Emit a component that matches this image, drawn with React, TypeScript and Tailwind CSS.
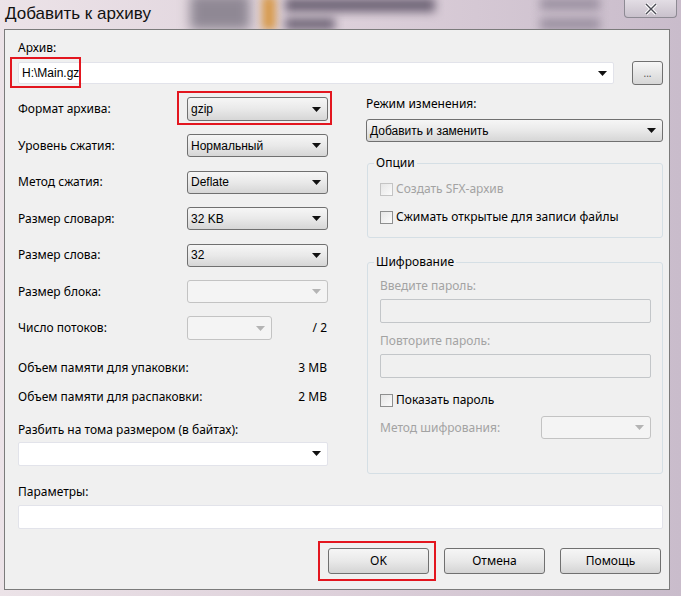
import React from 'react'

const font = { fontFamily: '"Noto Sans", "Open Sans", sans-serif' }
const valueFont = { fontFamily: '"Liberation Sans", Arial, sans-serif' }

const Arrow = ({ disabled }: { disabled?: boolean }) => (
  <svg width="9" height="5" viewBox="0 0 9 5" className="shrink-0">
    <path d="M0 0 H9 L4.5 5 Z" fill={disabled ? '#b4b4b4' : '#111'} />
  </svg>
)

// Windows 7 style dropdown
const Combo = ({
  value,
  className,
  disabled,
  editable,
}: {
  value?: string
  className: string
  disabled?: boolean
  editable?: boolean
}) => {
  let look = 'border-[#707070] bg-gradient-to-b from-[#f6f6f6] via-[#e9e9e9] to-[#d6d6d6] rounded-[3px]'
  if (disabled) look = 'border-[#c3c3c3] bg-[#f4f4f4] rounded-[3px]'
  if (editable) look = 'border-[#e2e3ea] bg-white rounded-[2px]'
  return (
    <div className={`flex items-center justify-between border pl-[3px] pr-[6px] ${look} ${className}`}>
      <span style={valueFont} className="text-[12px] leading-none text-black">
        {value}
      </span>
      <Arrow disabled={disabled} />
    </div>
  )
}

const Row = ({ label, children }: { label: string; children: React.ReactNode }) => (
  <div className="flex h-[36.5px] items-center">
    <span className="w-[169px] text-[12px]">{label}</span>
    {children}
  </div>
)

const Check = ({ label, disabled }: { label: string; disabled?: boolean }) => (
  <div className="flex items-center gap-[3px]">
    <div
      className={`h-[13px] w-[13px] border bg-gradient-to-br from-[#e6e6e6] to-[#fbfbfb] ${
        disabled ? 'border-[#c4c4c4]' : 'border-[#8e8f8f]'
      }`}
    />
    <span className={`text-[12px] ${disabled ? 'text-[#a3a3a3]' : 'text-black'}`}>{label}</span>
  </div>
)

const Button = ({ label }: { label: string }) => (
  <div className="flex h-[26px] w-[101px] items-center justify-center rounded-[3px] border border-[#707070] bg-gradient-to-b from-[#f6f6f6] via-[#e9e9e9] to-[#d4d4d4] text-[12px]">
    {label}
  </div>
)

const Group = ({ title, className, children }: { title: string; className: string; children: React.ReactNode }) => (
  <div className={`relative rounded-[3px] border border-[#d5dfe5] ${className}`}>
    <span className="absolute -top-[9px] left-[6px] bg-[#f0f0f0] px-[2px] text-[12px] leading-[16px]">{title}</span>
    {children}
  </div>
)

export default function App() {
  return (
    <div
      style={font}
      className="relative flex h-[596px] w-[681px] flex-col overflow-hidden bg-gradient-to-r from-[#ece3e8] via-[#ddd0da] to-[#c9bccb] text-black"
    >
      {/* blurred desktop behind the glass frame */}
      <div className="pointer-events-none absolute left-0 top-0 h-[29px] w-[681px] overflow-hidden">
        <div className="absolute left-[190px] top-[-6px] h-[36px] w-[60px] bg-[#8f8894] blur-[6px]" />
        <div className="absolute left-[262px] top-[-4px] h-[34px] w-[14px] bg-[#d79a4c] blur-[4px]" />
        <div className="absolute left-[285px] top-[-2px] h-[14px] w-[150px] bg-[#6e6476] blur-[5px]" />
        <div className="absolute left-[285px] top-[18px] h-[12px] w-[50px] bg-[#6e6476] blur-[5px]" />
        <div className="absolute left-[540px] top-[-2px] h-[12px] w-[60px] bg-[#9a90a0] blur-[5px]" />
        <div className="absolute left-[540px] top-[18px] h-[12px] w-[60px] bg-[#9a90a0] blur-[5px]" />
      </div>

      {/* Title bar */}
      <div className="relative flex h-[29px] shrink-0 items-start justify-between">
        <span
          style={{ fontFamily: '"Liberation Sans", Arial, sans-serif' }}
          className="pl-[5px] pt-[4px] text-[17px] leading-[20px] text-[#111]"
        >
          Добавить к архиву
        </span>
        <div className="mr-[4px] flex h-[18px] w-[53px] items-center justify-center rounded-b-[4px] border border-t-0 border-[#8d8a93] bg-gradient-to-b from-[#e2dde4] to-[#c9c1cc]">
          <svg width="14" height="12" viewBox="0 0 14 12">
            <path d="M2 1 L12 11 M12 1 L2 11" stroke="#fff" strokeWidth="3.4" />
            <path d="M2 1 L12 11 M12 1 L2 11" stroke="#4b4b55" strokeWidth="1.4" />
          </svg>
        </div>
      </div>

      {/* Client area */}
      <div className="relative ml-[4px] mr-[11px] flex h-[561px] shrink-0">
        <div className="relative w-full border border-[#7b7b7b] bg-[#f0f0f0] pl-[13px] pr-[6px] pt-[10px]">
          {/* Archive path */}
          <div className="text-[12px] leading-[16px]">Архив:</div>
          <div className="mt-[5px] flex items-center">
            <Combo editable value="H:\Main.gz" className="h-[22px] w-[596px]" />
            <div className="ml-[18px] flex h-[24px] w-[31px] items-center justify-center rounded-[3px] border border-[#707070] bg-gradient-to-b from-[#f6f6f6] to-[#d6d6d6] text-[10px] leading-none text-[#555]">
              ...
            </div>
          </div>

          {/* Two columns */}
          <div className="mt-[6px] flex">
            <div className="w-[310px]">
              <Row label="Формат архива:">
                <Combo value="gzip" className="h-[24px] w-[141px]" />
              </Row>
              <Row label="Уровень сжатия:">
                <Combo value="Нормальный" className="h-[23px] w-[141px]" />
              </Row>
              <Row label="Метод сжатия:">
                <Combo value="Deflate" className="h-[23px] w-[141px]" />
              </Row>
              <Row label="Размер словаря:">
                <Combo value="32 KB" className="h-[23px] w-[141px]" />
              </Row>
              <Row label="Размер слова:">
                <Combo value="32" className="h-[23px] w-[141px]" />
              </Row>
              <Row label="Размер блока:">
                <Combo disabled className="h-[23px] w-[141px]" />
              </Row>
              <Row label="Число потоков:">
                <Combo disabled className="h-[24px] w-[85px]" />
                <span className="ml-auto pr-[1px] text-[12px]">/ 2</span>
              </Row>
              <div className="mt-[13px] flex justify-between text-[12px] leading-[16px]">
                <span>Объем памяти для упаковки:</span>
                <span className="pr-[1px]">3 MB</span>
              </div>
              <div className="mt-[13px] flex justify-between text-[12px] leading-[16px]">
                <span>Объем памяти для распаковки:</span>
                <span className="pr-[1px]">2 MB</span>
              </div>
              <div className="mt-[17px] text-[12px] leading-[16px]">Разбить на тома размером (в байтах):</div>
              <Combo editable className="mt-[4px] h-[24px] w-[310px]" />
            </div>

            <div className="ml-[38px] w-[297px]">
              <div className="mt-[5px] text-[12px] leading-[16px]">Режим изменения:</div>
              <Combo value="Добавить и заменить" className="mt-[7px] h-[23px] w-[297px]" />
              <Group title="Опции" className="ml-[1px] mt-[21px] h-[75px] w-[296px]">
                <div className="flex flex-col gap-[10px] pl-[12px] pt-[16px]">
                  <Check disabled label="Создать SFX-архив" />
                  <Check label="Сжимать открытые для записи файлы" />
                </div>
              </Group>
              <Group title="Шифрование" className="ml-[1px] mt-[24px] h-[212px] w-[296px]">
                <div className="flex flex-col pl-[12px] pr-[11px] pt-[15px]">
                  <span className="text-[12px] leading-[16px] text-[#a3a3a3]">Введите пароль:</span>
                  <div className="mt-[5px] h-[24px] rounded-[2px] border border-[#c3c6c9] bg-[#f0f0f0]" />
                  <span className="mt-[10px] text-[12px] leading-[16px] text-[#a3a3a3]">Повторите пароль:</span>
                  <div className="mt-[5px] h-[24px] rounded-[2px] border border-[#c3c6c9] bg-[#f0f0f0]" />
                  <div className="mt-[13px]">
                    <Check label="Показать пароль" />
                  </div>
                  <div className="mt-[7px] flex items-center justify-between">
                    <span className="text-[12px] text-[#a3a3a3]">Метод шифрования:</span>
                    <Combo disabled className="h-[23px] w-[110px]" />
                  </div>
                </div>
              </Group>
            </div>
          </div>

          {/* Parameters */}
          <div className="mt-[10px] text-[12px] leading-[16px]">Параметры:</div>
          <div className="mt-[5px] h-[24px] w-[645px] rounded-[2px] border border-[#e2e3ea] bg-white" />

          {/* Buttons */}
          <div className="mt-[19px] flex justify-end gap-[15px] pr-[2px]">
            <Button label="OK" />
            <Button label="Отмена" />
            <Button label="Помощь" />
          </div>

          {/* Red highlight annotations */}
          <div className="pointer-events-none absolute left-[5px] top-[27px] h-[31px] w-[71px] border-2 border-[#e3161f]" />
          <div className="pointer-events-none absolute left-[172px] top-[61px] h-[34px] w-[155px] border-2 border-[#e3161f]" />
          <div className="pointer-events-none absolute left-[313px] top-[511px] h-[40px] w-[118px] border-2 border-[#e3161f]" />
        </div>
      </div>
    </div>
  )
}
